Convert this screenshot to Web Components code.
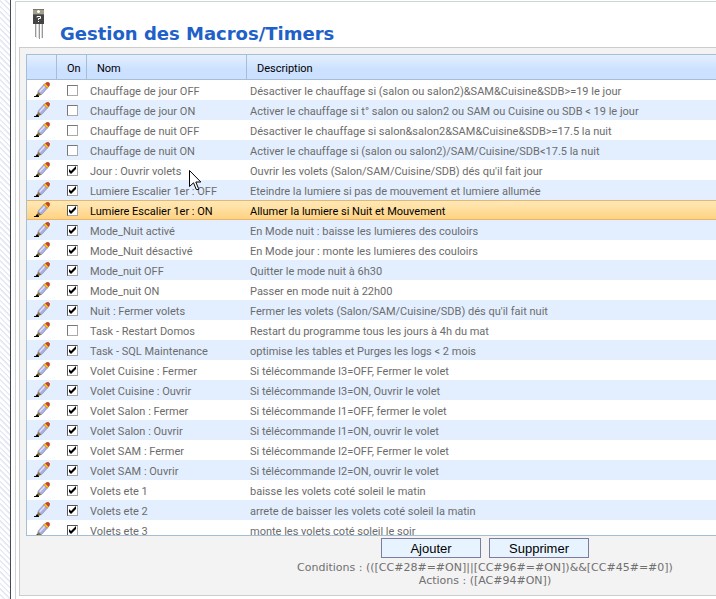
<!DOCTYPE html>
<html lang="fr">
<head>
<meta charset="utf-8">
<title>Gestion des Macros/Timers</title>
<style>
html, body { margin: 0; height: 100%; }
body { font-family: Roboto, "DejaVu Sans Condensed", sans-serif; font-size: 11px; color: #6c6c6c; background: #fff; }
</style>
</head>
<body>
<app-page>
  <page-title slot="title">Gestion des Macros/Timers</page-title>
  <app-panel>
    <macro-grid></macro-grid>
    <panel-footer>
      <action-bar>
        <action-button>Ajouter</action-button>
        <action-button>Supprimer</action-button>
      </action-bar>
      <macro-summary>
        <span slot="conditions">(([CC#28#=#ON]||[CC#96#=#ON])&amp;&amp;[CC#45#=#0])</span>
        <span slot="actions">([AC#94#ON])</span>
      </macro-summary>
    </panel-footer>
  </app-panel>
</app-page>
<mouse-pointer></mouse-pointer>
<script>
const define = (name, html, setup) => customElements.define(name, class extends HTMLElement {
  constructor() {
    super();
    const t = document.createElement('template');
    t.innerHTML = html;
    this.attachShadow({ mode: 'open' }).append(t.content.cloneNode(true));
    if (setup) setup(this.shadowRoot);
  }
});

define('app-page', `
<style>
:host { display: flex; height: 100vh; box-sizing: border-box; padding-left: 10px;
  background: repeating-linear-gradient(45deg, #fff 0 2px, #e4e7f5 3px 4px); }
main { flex: 1; min-width: 0; display: flex; flex-direction: column; box-sizing: border-box; padding: 1px 0 0 4px;
  background: #fff; border-left: 1px solid #444b55; }
section { flex: 1; min-height: 0; display: flex; flex-direction: column; padding: 0 0 3px 3px;
  border: solid #ccd4d6; border-width: 1px 0 0 1px; }
</style>
<main><section><slot name="title"></slot><slot></slot></section></main>`);

define('page-title', `
<style>
:host { display: flex; align-items: flex-start; height: 45px; padding-left: 14px; box-sizing: border-box; }
svg { width: 12px; height: 32px; margin-top: 7px; }
h1 { margin: 20px 0 0 15px; font: bold 18px/24px "DejaVu Sans", sans-serif; color: #2060c8; }
</style>
<svg viewBox="0 0 12 32" aria-hidden="true">
  <path d="M2.500 15V28M6.500 15V30M9.500 15V29" stroke="#999" fill="none"/>
  <path d="M3.500 15V29M5.500 15V29M8.500 15V29" stroke="#dcdcdc" fill="none"/>
  <rect x="0" y="0" width="11" height="5" fill="#a3a08c"/>
  <rect x="0" y="0" width="11" height="1" fill="#77756a"/>
  <circle cx="5.500" cy="2.500" r="1.500" fill="#fff"/>
  <rect x="0" y="5" width="11" height="10" fill="#444"/>
  <rect x="0" y="5" width="11" height="1" fill="#666"/>
  <path d="M4 8.500V7.500H7.500V9.500H5.500V11M5.500 12V13" stroke="#fff" fill="none"/>
</svg>
<h1><slot></slot></h1>`);

define('app-panel', `
<style>
:host { flex: 1; min-height: 0; display: flex; flex-direction: column; box-sizing: border-box;
  padding: 6px 0 7px 6px; background: #f3f3f3; border: solid #ccc; border-width: 1px 0 1px 1px; }
</style>
<slot></slot>`);

define('pencil-icon', `
<style>
:host { display: block; width: 16px; height: 16px; }
svg { display: block; }
</style>
<svg width="16" height="16" viewBox="0 0 16 16" aria-hidden="true">
  <path d="M0 14.500H5" stroke="#111"/>
  <path d="M4 9L10 2.300L13.800 5.700L8 12.200L4 13.500Z" fill="#a9afe0" stroke="#8083a6" stroke-width=".5"/>
  <path d="M5.800 9.800L11 4" stroke="#dde0fa" stroke-width="1.500"/>
  <path d="M2.500 14.300L4 10L7.500 12.700Z" fill="#8a7028"/>
  <path d="M1 15L3 12L4.800 14Z" fill="#000"/>
  <path d="M9.600 3L11.200 1.200L14.800 4.500L13.200 6.200Z" fill="#f8b828" stroke="#a06a20" stroke-width=".4"/>
  <path d="M11.600 1.200Q13 -.2 14.800 .6Q16.400 2 15.400 3.500L14.500 4.500Z" fill="#d8401c" stroke="#8c2a14" stroke-width=".4"/>
</svg>`);

const rows = [
  [0, 'Chauffage de jour OFF', 'Désactiver le chauffage si (salon ou salon2)&SAM&Cuisine&SDB>=19 le jour'],
  [0, 'Chauffage de jour ON', 'Activer le chauffage si t° salon ou salon2 ou SAM ou Cuisine ou SDB < 19 le jour'],
  [0, 'Chauffage de nuit OFF', 'Désactiver le chauffage si salon&salon2&SAM&Cuisine&SDB>=17.5 la nuit'],
  [0, 'Chauffage de nuit ON', 'Activer le chauffage si (salon ou salon2)/SAM/Cuisine/SDB<17.5 la nuit'],
  [1, 'Jour : Ouvrir volets', "Ouvrir les volets (Salon/SAM/Cuisine/SDB) dés qu'il fait jour"],
  [1, 'Lumiere Escalier 1er : OFF', 'Eteindre la lumiere si pas de mouvement et lumiere allumée'],
  [1, 'Lumiere Escalier 1er : ON', 'Allumer la lumiere si Nuit et Mouvement', 'selected'],
  [1, 'Mode_Nuit activé', 'En Mode nuit : baisse les lumieres des couloirs'],
  [1, 'Mode_Nuit désactivé', 'En Mode jour : monte les lumieres des couloirs'],
  [1, 'Mode_nuit OFF', 'Quitter le mode nuit à 6h30'],
  [1, 'Mode_nuit ON', 'Passer en mode nuit à 22h00'],
  [1, 'Nuit : Fermer volets', "Fermer les volets (Salon/SAM/Cuisine/SDB) dés qu'il fait nuit"],
  [0, 'Task - Restart Domos', 'Restart du programme tous les jours à 4h du mat'],
  [1, 'Task - SQL Maintenance', 'optimise les tables et Purges les logs < 2 mois'],
  [1, 'Volet Cuisine : Fermer', 'Si télécommande I3=OFF, Fermer le volet'],
  [1, 'Volet Cuisine : Ouvrir', 'Si télécommande I3=ON, Ouvrir le volet'],
  [1, 'Volet Salon : Fermer', 'Si télécommande I1=OFF, fermer le volet'],
  [1, 'Volet Salon : Ouvrir', 'Si télécommande I1=ON, ouvrir le volet'],
  [1, 'Volet SAM : Fermer', 'Si télécommande I2=OFF, Fermer le volet'],
  [1, 'Volet SAM : Ouvrir', 'Si télécommande I2=ON, ouvrir le volet'],
  [1, 'Volets ete 1', 'baisse les volets coté soleil le matin'],
  [1, 'Volets ete 2', 'arrete de baisser les volets coté soleil la matin'],
  [1, 'Volets ete 3', 'monte les volets coté soleil le soir']
];

define('macro-grid', `
<style>
:host { display: block; flex: 1; min-height: 0; overflow: hidden; background: #fff; border: solid #a4bed4; border-width: 1px 0 1px 1px; }
table { width: 100%; table-layout: fixed; border-collapse: separate; border-spacing: 0; }
.edit, .on { width: 30px; } .name { width: 160px; }
th { height: 25px; padding: 2px 0 0 10px; box-sizing: border-box; text-align: left; font-weight: normal; color: #000; white-space: nowrap;
  background: linear-gradient(#e4efff, #cce1ff 60%, #cce1ff);
  border-right: 1px solid #a4bed4; border-bottom: 1px solid #a4bed4; }
th:last-child { border-right: 0; }
td { height: 20px; padding: 3px 0 0 3px; box-sizing: border-box; line-height: 14px; white-space: nowrap; overflow: hidden; }
tr:nth-child(even) td { background: #e3efff; }
tr.selected td { color: #000; background: linear-gradient(#ffe9b8, #ffd282); border: solid #e9b56a; border-width: 1px 0; }
tr td:first-child { padding: 0 0 0 7px; } tr td:nth-child(2) { padding: 1px 0 0 10px; }
button { display: block; padding: 0; border: 0; background: none; }
input { appearance: none; display: block; margin: 0; width: 11px; height: 11px; box-sizing: border-box; background: #fff;
  border: 1px solid; border-color: #777 #aaa #aaa #777; }
input:checked { border-color: #555 #aaa #aaa #555; }
input:checked::before { content: ""; display: block; width: 9px; height: 9px; background: #000;
  clip-path: polygon(1px 3px, 3px 5px, 8px 0, 8px 3px, 3px 8px, 1px 6px); }
</style>
<table>
  <colgroup><col class="edit"><col class="on"><col class="name"><col></colgroup>
  <thead><tr><th></th><th>On</th><th>Nom</th><th>Description</th></tr></thead>
  <tbody></tbody>
</table>`, root => {
  const body = root.querySelector('tbody');
  for (const [on, name, text, cls] of rows) {
    const tr = body.insertRow();
    if (cls) tr.className = cls;
    const edit = document.createElement('button');
    edit.type = 'button';
    edit.setAttribute('aria-label', 'Modifier ' + name);
    edit.append(document.createElement('pencil-icon'));
    tr.insertCell().append(edit);
    const box = document.createElement('input');
    box.type = 'checkbox';
    box.checked = !!on;
    box.setAttribute('aria-label', name);
    tr.insertCell().append(box);
    tr.insertCell().textContent = name;
    tr.insertCell().textContent = text;
  }
});

define('panel-footer', `
<style>:host { display: grid; gap: 3px; padding: 2px 0 1px 228px; }</style>
<slot></slot>`);

define('action-bar', `
<style>:host { display: flex; justify-content: center; gap: 8px; }</style>
<slot></slot>`);

define('action-button', `
<style>
button { display: block; width: 100px; height: 20px; padding: 0; box-sizing: border-box;
  font: 13px "Liberation Sans", Arial, sans-serif; color: #000; background: #e7f4ff; border: 1px solid #7c7ca0; }
</style>
<button type="button"><slot></slot></button>`);

define('macro-summary', `
<style>
:host { display: block; text-align: center; font: 11px/13px "DejaVu Sans", sans-serif; color: #707070; }
div { white-space: nowrap; }
</style>
<div>Conditions : <slot name="conditions"></slot></div>
<div>Actions : <slot name="actions"></slot></div>`);

define('mouse-pointer', `
<style>:host { position: absolute; left: 189px; top: 170px; pointer-events: none; } svg { display: block; }</style>
<svg width="13" height="21" viewBox="0 0 13 21" aria-hidden="true">
  <path d="M.5 .5V16.500L4.500 12.800L7.300 19.500H9.500V18.500L6.800 12H11.800Z" fill="#fff" stroke="#000"/>
</svg>`);
</script>
</body>
</html>
